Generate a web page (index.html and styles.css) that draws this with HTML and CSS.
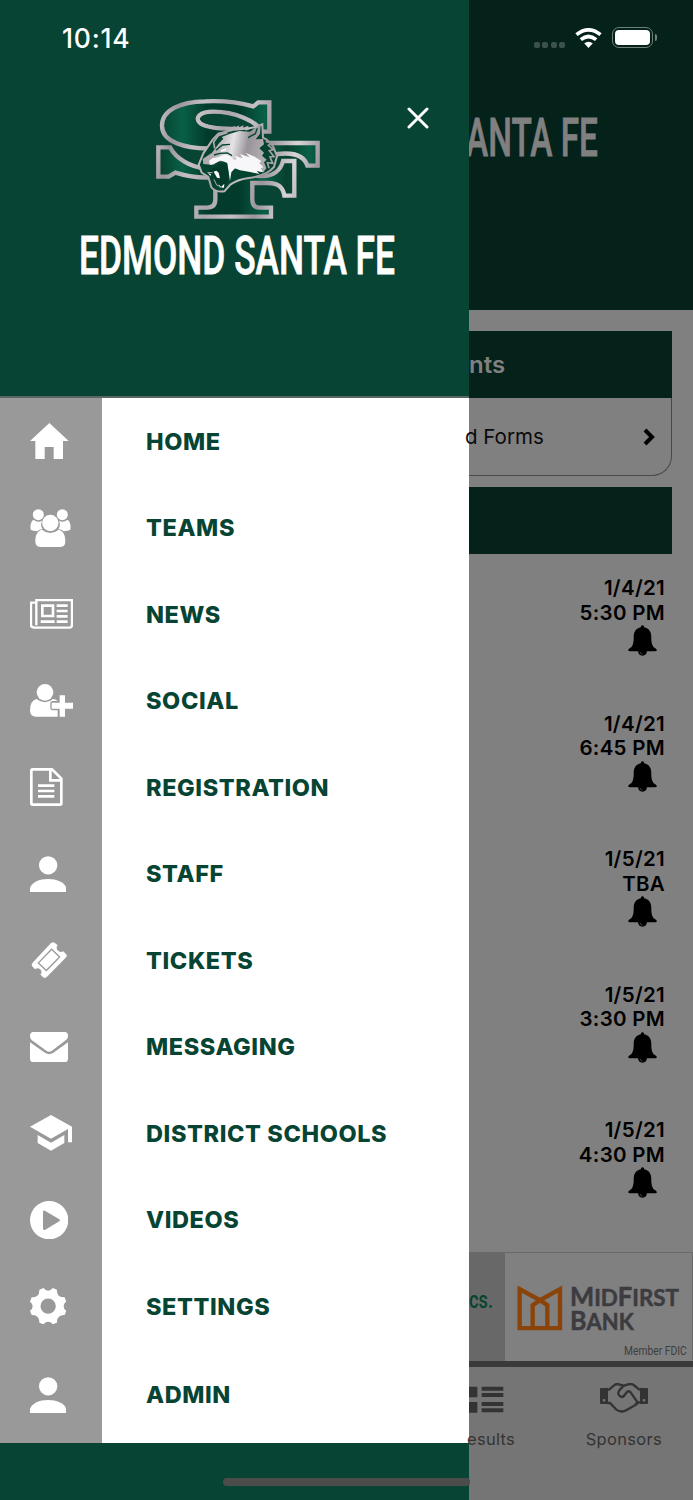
FILE: index.html
```html
<!DOCTYPE html>
<html lang="en">
<head>
    <meta charset="UTF-8">
    <meta name="viewport" content="width=device-width, initial-scale=1.0">
    <title>Edmond Santa Fe</title>
    <link rel="stylesheet" href="styles.css">
</head>
<body>
<svg class="symbols" aria-hidden="true">
    <symbol id="icon-person" viewBox="0 0 109 109">
        <circle cx="54.500" cy="28" r="27.500"/>
        <path d="M0 109V96C5 79 28 69 54.500 69S104 79 109 96V109Z"/>
    </symbol>
    <symbol id="icon-bell" viewBox="0 0 86 92">
        <path d="M43 1c3 0 5 2 5 6 14 3 21 13 21 27 0 22 3 30 13 36 5 4 5 8-1 8H56c0 8-5 13-13 13s-13-5-13-13H5c-6 0-6-4-1-8 10-6 13-14 13-36C17 20 24 10 38 7c0-4 2-6 5-6Z"/>
        <path d="M36 80q1 6 7 7" fill="none" stroke="#808080" stroke-width="1.500"/>
    </symbol>
</svg>

<div class="app">
    <aside class="drawer">
        <header class="drawer-header">
            <div class="clock">10:14</div>
            <div class="brand">
                <svg class="brand-logo" viewBox="0 0 600 435">
                    <defs>
                        <linearGradient id="silver" gradientUnits="userSpaceOnUse" x1="50" y1="0" x2="270" y2="50" spreadMethod="reflect">
                            <stop offset="0" stop-color="#d8d5d8"/>
                            <stop offset=".35" stop-color="#9b959c"/>
                            <stop offset=".65" stop-color="#c4c0c4"/>
                            <stop offset="1" stop-color="#aaa5aa"/>
                        </linearGradient>
                        <linearGradient id="green" gradientUnits="userSpaceOnUse" x1="60" y1="0" x2="250" y2="0" spreadMethod="reflect">
                            <stop offset="0" stop-color="#06412f"/>
                            <stop offset=".35" stop-color="#096047"/>
                            <stop offset=".75" stop-color="#023b2b"/>
                            <stop offset="1" stop-color="#023b2b"/>
                        </linearGradient>
                        <linearGradient id="fur" x1="0" y1="0" x2="1" y2=".15">
                            <stop offset="0" stop-color="#a8a3a9"/>
                            <stop offset=".3" stop-color="#b5b1b6"/>
                            <stop offset=".52" stop-color="#e5e3e6"/>
                            <stop offset=".75" stop-color="#99949b"/>
                            <stop offset="1" stop-color="#b0acb0"/>
                        </linearGradient>
                    </defs>
                    <g fill="url(#green)" stroke="url(#silver)" stroke-width="13">
                        <path d="M340 64L355 52H388V140H364C350 108 285 80 220 80C180 80 162 98 180 114C204 132 260 130 305 133L410 200L360 275C300 290 260 285 205 278C165 279 135 272 106 263L86 275H55V187H90C108 222 155 248 195 250L225 190C130 194 66 168 66 122C66 76 120 50 195 49C260 46 305 54 340 64Z"/>
                        <path d="M405 174H533V242H502C493 213 462 201 412 207L360 273C402 276 422 254 429 228H463V332H433C429 307 416 294 384 294H337V344C337 360 344 368 360 368H393V395H169V368H201C218 368 226 360 226 343V260L300 174Z"/>
                    </g>
                    <!-- opening inside the upper bowl of the S -->
                    <path fill="#074434" d="M215 87C186 88 176 101 186 110C205 124 262 122 310 124C290 104 254 88 215 87Z"/>
                    <path fill="#04442f" stroke="url(#silver)" stroke-width="6" d="M190 205L176 239L185 263L205 276L214 307Q229 323 253 319L272 298Q294 283 327 279Q380 272 402 246L411 213L399 184L380 164L369 158L367 118L348 126L319 131L280 134L235 146L218 164Z"/>
                    <path fill="url(#fur)" d="M188 222L216 203L228 187L237 175L250 161L245 156L270 146L298 138L330 140L362 117L360 146L347 163L369 162L372 178L358 190L372 203L366 212L380 224L372 232L379 250L370 262L340 256L270 248L260 229L232 229L221 239L190 238Z"/>
                    <path fill="none" stroke="url(#silver)" stroke-width="5" d="M224 190L221 171L236 151L262 143M270 130l12-3-3 6 14-7-3 7 17-8-2 7 17-6-2 7 14-5M377 170l20 2-12 9 15 13-12 3 14 18-12 1 8 19-16-2 5 17"/>
                    <path fill="none" stroke="#064732" stroke-width="4" d="M228 196L247 180L270 178M222 210L240 205L262 204L276 212M352 130l-6 16-22 12"/>
                    <path fill="#f7f7f9" d="M217 220L236 216L254 208L270 214L283 226L290 222L284 212L308 220L300 207L329 217L316 203L344 215L364 228L358 234L370 247L362 250L369 262L350 257L358 267L326 260L300 256L285 250L274 262L270 288L262 234L242 226L228 234L210 240L207 228Z"/>
                    <path fill="#f7f7f9" d="M243 195L261 189L256 197L243 201Z"/>
                    <path fill="#033a29" d="M208 254L226 246L246 238L258 234L265 260L263 285L256 303L241 305L228 290L220 268L205 266Z"/>
                    <path fill="#fff" d="M221 260l10 18 9 2-4-17-7-6ZM236 298l7 8 10-10-1 12-13-1ZM204 264l9 3-2 6Z"/>
                    <path fill="#04402f" d="M188 238l14 1-2 9-9-3Z"/>
                    <path fill="none" stroke="#aaa5aa" stroke-width="3" d="M202 262l16 1M222 283l8 17 12 5"/>
                </svg>
                <svg class="brand-name" viewBox="0 0 318 44">
                    <text x="0" y="40" textLength="316" lengthAdjust="spacingAndGlyphs">EDMOND SANTA FE</text>
                </svg>
            </div>
            <button class="close-btn" aria-label="Close menu">
                <svg viewBox="0 0 22 22"><path d="M2 2L20 20M20 2L2 20"/></svg>
            </button>
        </header>

        <nav class="menu">
            <a class="menu-item">
                <span class="menu-icon"><svg width="38.700" height="36" viewBox="0 0 116 108"><path d="M58 0L116 54H99V108H71V72H44V108H16V54H0Z"/></svg></span>
                <span class="menu-label">HOME</span>
            </a>
            <a class="menu-item">
                <span class="menu-icon"><svg width="41" height="38" viewBox="0 0 123 114">
                    <circle cx="25" cy="17" r="16.500"/><circle cx="97" cy="17" r="16.500"/>
                    <path d="M10 32Q24 42 36 35L34 42Q32 52 38 61Q29 60 22 67Q9 66 2 62Q-1 41 10 32ZM113 32Q99 42 87 35L89 42Q91 52 85 61Q94 60 101 67Q114 66 121 62Q124 41 113 32Z"/>
                    <circle cx="61" cy="42" r="24.500"/>
                    <path d="M36 62Q61 82 86 62C100 65 106 79 106 97Q106 114 91 114H31Q16 114 16 97C16 79 22 65 36 62Z"/>
                </svg></span>
                <span class="menu-label">TEAMS</span>
            </a>
            <a class="menu-item">
                <span class="menu-icon"><svg class="icon-line" width="43.300" height="30" viewBox="0 0 130 90">
                    <path d="M19 3H126V79Q126 86 118 86H13Q3 86 3 77V11H19ZM19 11V79" stroke-width="7"/>
                    <path d="M37 20H69V51H37ZM32 68H74M80 20H113M80 36H113M80 52H113M80 68H113" stroke-width="8"/>
                </svg></span>
                <span class="menu-label">NEWS</span>
            </a>
            <a class="menu-item">
                <span class="menu-icon"><svg width="43.300" height="33" viewBox="0 0 130 99">
                    <circle cx="45" cy="25" r="25"/>
                    <path d="M20 45Q45 65 69 45Q78 45 83 51H68Q61 51 61 58V72Q61 79 68 79H83V98H18Q1 98 0 80Q0 50 20 45ZM89 34H105V56H130V74H105V98H89V74H65V56H89Z"/>
                </svg></span>
                <span class="menu-label">SOCIAL</span>
            </a>
            <a class="menu-item">
                <span class="menu-icon"><svg class="icon-line" width="32.700" height="38" viewBox="0 0 98 114">
                    <path d="M8 4H66L94 32V106Q94 110 90 110H8Q4 110 4 106V8Q4 4 8 4ZM61 4V37H94M24 53H73M24 69H73M24 85H73" stroke-width="8"/>
                </svg></span>
                <span class="menu-label">REGISTRATION</span>
            </a>
            <a class="menu-item">
                <span class="menu-icon"><svg width="36.300" height="36.300"><use href="#icon-person"/></svg></span>
                <span class="menu-label">STAFF</span>
            </a>
            <a class="menu-item">
                <span class="menu-icon"><svg width="37" height="36.500" viewBox="-3 0 111 110">
                    <path d="M60 3Q67-2 72 3L80 10Q74 18 80 25Q88 34 97 28L105 36Q110 41 105 47L48 105Q42 111 36 106L28 98Q35 90 28 83Q20 75 12 82L4 74Q0 69 4 63Z"/>
                    <path d="M62 22L86 45L46 86L22 63Z" fill="none" stroke="#999" stroke-width="4"/>
                </svg></span>
                <span class="menu-label">TICKETS</span>
            </a>
            <a class="menu-item">
                <span class="menu-icon"><svg width="38" height="30" viewBox="0 0 114 90">
                    <path d="M10 0H104Q114 0 114 12Q114 21 104 27L66 56Q57 62 49 56L10 28Q0 22 0 12Q0 0 10 0Z"/>
                    <path d="M0 31L46 63Q57 70 69 63L114 31V80Q114 90 104 90H10Q0 90 0 80Z"/>
                </svg></span>
                <span class="menu-label">MESSAGING</span>
            </a>
            <a class="menu-item">
                <span class="menu-icon"><svg width="42" height="35.700" viewBox="0 0 126 107">
                    <path d="M63 0L126 35V82H114V42L63 71L0 35ZM23 60L63 83L103 60V84L63 107L23 84Z"/>
                </svg></span>
                <span class="menu-label">DISTRICT SCHOOLS</span>
            </a>
            <a class="menu-item">
                <span class="menu-icon"><svg width="38.300" height="38.300" viewBox="0 0 115 115">
                    <path fill-rule="evenodd" d="M57.500 0A57.500 57.500 0 1 1 57.500 115A57.500 57.500 0 1 1 57.500 0ZM39 33V82Q39 89 46 86L88 61Q92 58 88 55L46 30Q39 26 39 33Z"/>
                </svg></span>
                <span class="menu-label">VIDEOS</span>
            </a>
            <a class="menu-item">
                <span class="menu-icon"><svg width="36.300" height="36.300" viewBox="0 0 109 109">
                    <path fill-rule="evenodd" d="M28 5L41 0Q46 8 54.500 8T68 0L81 5Q80 15 85 22T104 28L109 41Q101 46 101 54.500T109 68L104 81Q94 80 87 86T81 104L68 109Q63 101 54.500 101T41 109L28 104Q29 94 23 87T5 81L0 68Q8 63 8 54.500T0 41L5 28Q15 29 22 23T28 5ZM54.500 31.500A23 23 0 1 0 54.500 77.500A23 23 0 1 0 54.500 31.500Z"/>
                </svg></span>
                <span class="menu-label">SETTINGS</span>
            </a>
            <a class="menu-item">
                <span class="menu-icon"><svg width="36.300" height="36.300"><use href="#icon-person"/></svg></span>
                <span class="menu-label">ADMIN</span>
            </a>
        </nav>
    </aside>

    <main class="page">
        <header class="page-header">
            <svg class="page-name" viewBox="0 0 132 44">
                <text x="-3" y="40" textLength="132" lengthAdjust="spacingAndGlyphs">ANTA FE</text>
            </svg>
        </header>
        <div class="content">
            <h2 class="section-title">nts</h2>
            <div class="card">
                <span class="card-label">d Forms</span>
                <svg class="chevron" viewBox="0 0 12 18"><path d="M2 2L9 9L2 16"/></svg>
            </div>
            <div class="section-title events-title"></div>
            <div class="event"><span>1/4/21</span><span>5:30 PM</span><svg class="bell"><use href="#icon-bell"/></svg></div>
            <div class="event"><span>1/4/21</span><span>6:45 PM</span><svg class="bell"><use href="#icon-bell"/></svg></div>
            <div class="event"><span>1/5/21</span><span>TBA</span><svg class="bell"><use href="#icon-bell"/></svg></div>
            <div class="event"><span>1/5/21</span><span>3:30 PM</span><svg class="bell"><use href="#icon-bell"/></svg></div>
            <div class="event"><span>1/5/21</span><span>4:30 PM</span><svg class="bell"><use href="#icon-bell"/></svg></div>
        </div>
        <div class="sponsor">
            <div class="sponsor-text">
                <svg viewBox="0 0 36 30"><text x="0" y="24" textLength="24" lengthAdjust="spacingAndGlyphs">cs.</text></svg>
            </div>
            <svg class="sponsor-logo" viewBox="134 71 561 318">
                <g fill="none" stroke="#8a4308" stroke-width="13">
                    <path d="M178 295V178L239 211L299 178V295ZM178 295H299"/>
                    <path d="M217 295V226L239 211L261 226V295"/>
                </g>
                <g class="bank-name">
                    <text x="329" y="228" textLength="327" lengthAdjust="spacingAndGlyphs">M<tspan class="small">ID</tspan>F<tspan class="small">IRST</tspan></text>
                    <text x="329" y="300" textLength="191" lengthAdjust="spacingAndGlyphs">B<tspan class="small">ANK</tspan></text>
                </g>
                <text class="fdic" x="491" y="377" textLength="188" lengthAdjust="spacingAndGlyphs">Member FDIC</text>
            </svg>
        </div>
        <div class="tab-bar">
            <div class="tab tab-results">
                <svg width="35" height="27" viewBox="0 0 105 81"><path d="M0 2H25V34H0ZM0 48H25V80H0ZM38 2H103V14H38ZM38 21H103V33H38ZM38 48H103V60H38ZM38 67H103V79H38Z"/></svg>
                <span>esults</span>
            </div>
            <div class="tab tab-sponsors">
                <svg width="48" height="30" viewBox="0 0 144 90">
                    <path fill-rule="evenodd" d="M0 18Q0 15 3 15H24V63H3Q0 63 0 60ZM12 48A4 4 0 1 0 12 56A4 4 0 1 0 12 48ZM144 18Q144 15 141 15H120V63H141Q144 63 144 60ZM132 48A4 4 0 1 0 132 56A4 4 0 1 0 132 48Z"/>
                    <path d="M22 20H27L45 5Q52 1 59 5L72 8L84 4Q95 1 101 6L118 20H123M22 60H30L48 79Q64 91 80 81L108 65L116 58H123M71 8L58 22Q51 33 60 40Q68 45 74 36L81 27Q87 22 92 28L111 56Q112 63 104 65" fill="none" stroke="#333" stroke-width="7"/>
                </svg>
                <span>Sponsors</span>
            </div>
        </div>
    </main>

    <div class="status-icons">
        <div class="signal"><i></i><i></i><i></i><i></i></div>
        <svg class="wifi" viewBox="0 0 80 60">
            <g fill="none" stroke="#fff" stroke-width="11"><path d="M4 20Q40-9 76 20M17 35Q40 16 63 35"/></g>
            <path fill="#fff" d="M27 46Q40 36 53 46L40 60Z"/>
        </svg>
        <div class="battery"></div>
    </div>
    <div class="home-indicator"></div>
</div>
</body>
</html>
```
FILE: styles.css
```css
* {
    box-sizing: border-box;
}

body {
    margin: 0;
    font-family: Inter, "Liberation Sans", sans-serif;
}

svg {
    display: block;
    flex-shrink: 0;
}

.symbols {
    display: none;
}

.app {
    position: relative;
    display: flex;
    width: 693px;
    height: 1500px;
    overflow: hidden;
}

/* Drawer */
.drawer {
    width: 469px;
    flex-shrink: 0;
    background: #074434;
}

.drawer-header {
    position: relative;
    height: 398px;
    padding-top: 22px;
    border-bottom: 2px solid #5b6662;
}

.clock {
    height: 32px;
    padding-left: 62px;
    color: white;
    font-size: 26.5px;
    font-weight: 500;
    line-height: 32px;
    letter-spacing: 0.8px;
}

.brand {
    padding: 31px 0 0 79px;
}

.brand-logo {
    width: 200px;
    height: 145px;
    margin-left: 61px;
}

.brand-name {
    width: 318px;
    height: 44px;
    margin-top: 4px;
}

.brand-name text,
.page-name text {
    font-family: Roboto, sans-serif;
    font-size: 53px;
    font-weight: 500;
    fill: white;
    stroke: white;
    stroke-width: 0.8;
}

.close-btn {
    position: absolute;
    top: 107px;
    right: 40px;
    width: 22px;
    height: 22px;
    padding: 0;
    border: none;
    background: none;
}

.close-btn path {
    fill: none;
    stroke: white;
    stroke-width: 3;
    stroke-linecap: round;
}

.menu {
    height: 1045px;
    background: linear-gradient(to right, #999 102px, white 102px);
}

.menu-item {
    display: flex;
    align-items: center;
    height: 86.5px;
}

.menu-item:last-child {
    margin-top: 2px;
}

.menu-icon {
    width: 102px;
    padding-left: 30px;
    flex-shrink: 0;
    fill: white;
}

.icon-line {
    fill: none;
    stroke: white;
}

.menu-label {
    padding-left: 44px;
    color: #074434;
    font-size: 23.5px;
    font-weight: 800;
    letter-spacing: 0.6px;
    white-space: nowrap;
}

/* Dimmed page next to the drawer */
.page {
    display: flex;
    flex-direction: column;
    width: 224px;
    background: #808080;
}

.page-header {
    height: 310px;
    padding-top: 116px;
    background: #04211a;
}

.page-name {
    width: 132px;
    height: 44px;
}

.page-name text {
    fill: #808080;
    stroke: #808080;
}

.content {
    height: 942px;
    padding: 21px 21px 0 0;
}

.section-title {
    height: 67px;
    margin: 0;
    background: #04211a;
    color: #808080;
    font-size: 24px;
    font-weight: 600;
    line-height: 67px;
}

.card {
    display: flex;
    justify-content: space-between;
    align-items: center;
    height: 78px;
    padding-right: 16px;
    margin-bottom: 11px;
    border: solid #484848;
    border-width: 0 1.5px 1.5px 0;
    border-bottom-right-radius: 20px;
    color: #0a0a0a;
    font-size: 20.5px;
}

.card-label {
    margin-left: -4px;
}

.chevron {
    width: 12px;
    height: 18px;
    fill: none;
    stroke: black;
    stroke-width: 4;
}

.events-title {
    margin-bottom: 22px;
}

.event {
    display: flex;
    flex-direction: column;
    align-items: flex-end;
    height: 135.6px;
    padding-right: 7px;
    font-size: 20.5px;
    font-weight: 600;
    line-height: 24.5px;
    letter-spacing: 0.3px;
}

.bell {
    width: 29px;
    height: 31px;
    margin: 0 8px 0 0;
}

.sponsor {
    display: flex;
    height: 109px;
    border-top: 1px solid #696969;
}

.sponsor-text {
    width: 36px;
    padding-top: 31px;
    background: #686868;
}

.sponsor-text svg {
    width: 36px;
    height: 30px;
}

.sponsor-text text {
    font-family: Roboto, sans-serif;
    font-size: 23px;
    font-weight: 500;
    fill: #07442e;
}

.sponsor-logo {
    width: 188px;
    height: 107px;
    border-right: 1px solid #696969;
}

.bank-name {
    font-family: Lato, sans-serif;
    font-size: 80px;
    font-weight: 700;
    fill: #3c3c40;
    stroke: #3c3c40;
    stroke-width: 1.5;
}

.bank-name .small {
    font-size: 70px;
}

.fdic {
    font-family: Roboto, sans-serif;
    font-size: 36px;
    fill: #3d3d3d;
}

.tab-bar {
    position: relative;
    display: flex;
    justify-content: space-between;
    height: 139px;
    padding-right: 31px;
    border-top: 6px solid #3a3a3a;
    background: #757575;
    color: #343434;
    fill: #333;
    font-size: 16.5px;
    letter-spacing: 0.3px;
}

.tab {
    display: flex;
    flex-direction: column;
    padding-top: 16px;
}

.tab-results svg {
    margin-top: 3px;
}

.tab-sponsors {
    align-items: center;
}

.tab span {
    margin-top: 16px;
    line-height: 20px;
}

.tab-results span {
    margin-left: -2px;
}

/* Phone chrome, floats over both panes */
.status-icons {
    position: absolute;
    top: 27px;
    right: 36px;
    display: flex;
    align-items: center;
}

.signal {
    display: flex;
    gap: 2.6px;
    margin: 14px 10px 0 0;
}

.signal i {
    width: 5.8px;
    height: 6px;
    border-radius: 2px;
    background: #3c514a;
}

.wifi {
    width: 27px;
    height: 20px;
    margin-right: 10px;
}

.battery {
    position: relative;
    width: 41px;
    height: 21px;
    margin-right: 4px;
    padding: 2px;
    border: 1.5px solid #70817b;
    border-radius: 7px;
    background: #04211a;
}

.battery::before {
    content: "";
    display: block;
    height: 100%;
    border-radius: 4px;
    background: white;
}

.battery::after {
    content: "";
    position: absolute;
    top: 6px;
    right: -5px;
    width: 2.5px;
    height: 7px;
    border-radius: 0 3px 3px 0;
    background: #70817b;
}

.home-indicator {
    position: absolute;
    left: 223px;
    bottom: 14px;
    width: 247px;
    height: 8px;
    border-radius: 4px;
    background: #4c4c4c;
}
```
